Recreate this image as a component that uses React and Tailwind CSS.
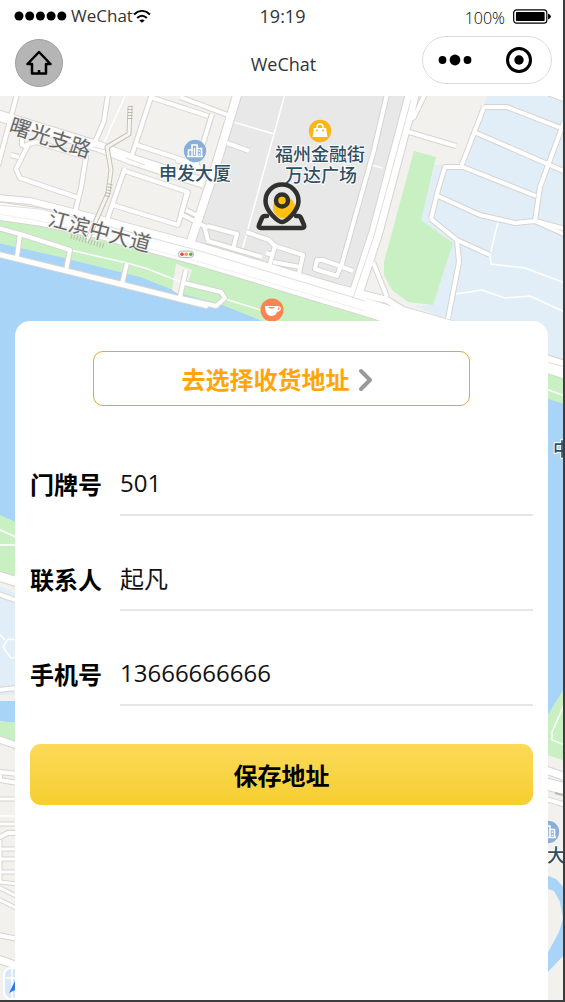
import { useState } from "react";

const LATIN = "font-['Open_Sans','Noto_Sans_CJK_SC',sans-serif]";

const narrowRoads = [
  "M17 94 L-2 166",
  "M108 94 L104 121 L95 142",
  "M152 94 L132 155",
  "M125 168 L107 220",
  "M22 138 V145 L27 147 L16 169 L20 178 L55 190 L79 198",
  "M11 155 L19 157",
  "M24 146 L36 142 L86 157 L81 188 L75 212",
  "M150 97 L208 116",
  "M137 145 L192 163",
  "M125 171 L188 192 L178 225 L113 205",
  "M186 210 L196 215",
  "M180 97 L233 117",
  "M212 114 L201 150 L196 165",
  "M176 160 L200 167",
  "M187 192 L181 214 L208 228",
  "M227 143 L249 151",
  "M204 225 L208 241 L262 257",
  "M207 226 L237 234 L233 249",
  "M246 232 L269 240 L275 246 L269 267",
  "M275 246 L303 255 L299 273",
  "M266 253 L273 255",
  "M273 262 L300 267",
  "M387 94 L374 150 L341 267",
  "M353 271 L323 260 L317 260 L315 269 L337 276 L340 268",
  "M425 94 L414 117 L406 122",
  "M409 132 L456 146",
  "M373 262 L387 297",
  "M484 107 H507 L566 130",
  "M484 107 L461 167",
  "M474 132 L566 172",
  "M431 219 L438 190 L445 167 H463 L536 196",
  "M564 122 L540 187 L535 221",
  "M431 219 L457 240 L490 255",
  "M438 196 L480 215 L515 223 L535 221 L566 229",
  "M535 221 L566 235",
  "M457 240 L459 262 L448 319",
  "M545 92 L566 100",
  "M-2 228 L20 234 L70 250 L66 270",
  "M20 234 L17 257",
  "M127 263 L122 284",
  "M186 270 L180 297",
  "M184 283 L221 292 L225 298 L216 306 L181 298",
];

const wideRoads = [
  { d: "M-3 115 L100 147 L133 160 L204 183", w: 10 },
  { d: "M238 92 L213 175 L189 247", w: 8 },
  { d: "M-3 254 L120 284 L208 306", w: 5 },
  { d: "M413 92 L376 232 L352 306", w: 13 },
  { d: "M-3 198 L30 201 L100 219 L200 246 L340 288 L382 299", w: 6 },
  { d: "M362 294 L387 300 L403 310 L452 324", w: 6 },
  { d: "M-3 211 L40 217 L100 230 L200 257 L365 307 L566 370", w: 17 },
];

const sideRoads = [
  { d: "M-2 576 L18 582", w: 9 },
  { d: "M-2 594 L18 601", w: 4 },
  { d: "M-2 690 L18 688", w: 4 },
  { d: "M-2 739 L18 746", w: 6 },
  { d: "M18 774 L0 772 V780 L18 783", w: 4 },
  { d: "M-2 799 H18", w: 3 },
  { d: "M-2 824 H18", w: 3 },
  { d: "M-2 838 L8 833 H18", w: 4 },
  { d: "M0 849 H18 M0 859 H18 M0 872 H18", w: 3 },
  { d: "M0 840 V882 L18 884", w: 3 },
  { d: "M-2 887 L18 897 M-2 899 L18 909", w: 3 },
  { d: "M-2 935 L18 939", w: 4 },
  { d: "M-2 959 L18 966", w: 7 },
  { d: "M546 770 L566 777", w: 7 },
  { d: "M546 784 L566 789", w: 11 },
  { d: "M546 799 L566 805", w: 4 },
];

function Building({ x, y }) {
  return (
    <g transform={`translate(${x} ${y})`}>
      <circle r="11.8" fill="#fff" opacity=".6" />
      <circle r="11.2" fill="#89aed8" />
      <path d="M-6.500 5V-1H-3V-6H2V5M2-2.500H6.500V5M-8 5.500H8" fill="none" stroke="#fff" strokeWidth="1.600" />
      <path d="M-3-1V5M-0.500-3V4M4.300-0.500V1M4.300 2.500V4" stroke="#fff" strokeWidth="1.400" />
    </g>
  );
}

function MapDrawing() {
  const all = [...narrowRoads.map((d) => ({ d, w: 4 })), ...wideRoads, ...sideRoads];
  return (
    <svg
      className="absolute inset-0 h-full w-full font-['Noto_Sans_CJK_SC',sans-serif]"
      viewBox="0 96 563 904"
      preserveAspectRatio="xMidYMin slice"
      role="img"
      aria-label="地图"
    >
      <rect y="96" width="563" height="904" fill="#f2f1ee" />
      <path d="M239 94 H420 L352 304 L190 247Z" fill="#e8e8e8" />
      <path d="M488 94 H565 V372 L415 306 L433 305 L453 243 L420 220 L435 165 H460Z" fill="#e1eef7" />
      <path d="M414 151 L436 157 L421 220 L453 243 L433 305 L408 302 L392 290 L384 275 V262Z" fill="#c8f0c2" />
      <path d="M-2 215 L180 262 L400 325 L565 376 V760 L-2 580Z" fill="#a7d4f7" />
      <path d="M-2 215 L100 240 L200 266 L400 326 L565 374 V404 L548 399 L262 321 L222 305 L183 294 L140 277 L60 257 L-2 243Z" fill="#c8f0c2" />
      <path d="M176 264 L192 270 L187 285 L181 296 L172 290Z" fill="#f2f1ee" />
      <path d="M-2 514 L18 523 V582 L-2 576Z" fill="#c8f0c2" />
      <path d="M-2 576 L18 582 V600 H-2Z" fill="#f2f1ee" />
      <path d="M-2 586 L18 594 V700 H-2Z" fill="#e1eef7" />
      <path d="M-2 695 H18 V702 H-2Z" fill="#f2f1ee" />
      <path d="M-2 701 H18 V723 L-2 721Z" fill="#a7d4f7" />
      <path d="M-2 721 L18 723 V745 L-2 738Z" fill="#c8f0c2" />
      <path d="M-2 739 L18 746 V1000 H-2Z" fill="#f2f1ee" />
      <path d="M565 687 L546 718 V755 L565 761Z" fill="#c8f0c2" />
      <path d="M546 755 L565 761 V1000 H546Z" fill="#f2f1ee" />
      <path d="M546 875 L556 879 L565 889 V954 L546 974 V956 L559 932 L563 918 L560 902 L554 891 L546 888Z" fill="#a7d4f7" />

      <g fill="none" stroke="#fff" strokeWidth="1.5">
        <path d="M125 96 L104 143 M285 94 L240 258 M233 122 L274 134 M372 165 L382 168" />
        <path d="M70 250 L127 263 L145 268 L181 282 M225 299 L277 315" />
        <path d="M498 222 L490 255 L491 264 L525 268 L565 283 M456 294 L482 290 L505 298 L530 296 L565 312" />
        <path d="M546 389 L565 396 M-2 529 L18 538 M-2 545 H18 M-2 816 H18" />
        <path d="M-2 633 L5 640 M18 640 L8 639 L3 647 L11 658 L18 657" />
        <path d="M564 705 L552 732 V740 L565 745" />
      </g>

      <g fill="none" strokeLinejoin="round">
        {all.map((r) => (
          <path key={`edge${r.d}`} d={r.d} stroke="#d6d4d1" strokeWidth={r.w + 2} />
        ))}
        {all.map((r) => (
          <path key={r.d} d={r.d} stroke="#fff" strokeWidth={r.w} />
        ))}
        <path d="M-2 205 L40 209 L100 224 L200 251 L365 301 M411 100 L374 236 L353 298 M93 147 L106 150 M126 158 L145 165 M546 362 L565 367" stroke="#e0deda" strokeWidth="1" />
        <path d="M-2 214 L40 221 L200 262 L365 311" stroke="#f0efed" strokeWidth="1" />
        <path d="M130 107 L129 134 L107 147 L111 170 L108 193 L87 241" stroke="#c6c2b6" strokeWidth="5" />
        <path d="M130 107 L129 134 L107 147 L111 170 L108 193 L87 241" stroke="#f7f6f1" strokeWidth="3" />
        <path d="M130.500 106 L130 120 M110.500 184 L107 197 M71 236 L104 246" stroke="#bdb9ad" strokeWidth="5" strokeDasharray="1 2" />
        <path d="M555 793 L563 795" stroke="#bdb9ad" strokeWidth="2" />
      </g>

      <g fill="#686868" stroke="#f4f3f1" strokeWidth="2" paintOrder="stroke" fontSize="21">
        <text transform="translate(8 132) rotate(18)">曙光支路</text>
        <text transform="translate(47 225) rotate(15)">江滨中大道</text>
      </g>

      <g fill="#304e64" stroke="#fff" strokeWidth="2" paintOrder="stroke" fontSize="18" fontWeight="500">
        <text x="159" y="180">申发大厦</text>
        <text x="320" y="161" textAnchor="middle">福州金融街</text>
        <text x="321" y="182" textAnchor="middle">万达广场</text>
        <text x="553" y="456">中</text>
        <text x="547" y="862">大</text>
      </g>

      <Building x={195} y={151} />
      <Building x={548} y={832} />

      <g transform="translate(320 131)">
        <circle r="11.200" fill="#fbb614" />
        <path d="M-6-3H6L7.500 6H-7.500Z" fill="#fff" />
        <path d="M-3-2V-4a3 3 0 0 1 6 0v2" fill="none" stroke="#fff" strokeWidth="1.500" />
        <circle cx="-3" cy="-0.500" r="1" fill="#fbb614" />
        <circle cx="3" cy="-0.500" r="1" fill="#fbb614" />
      </g>

      <g transform="translate(272 310)">
        <circle r="11.500" fill="#fb8353" />
        <path d="M-7-4H6C6 2 4 6-0.500 6S-7 2-7-4Z" fill="#fff" />
        <path d="M5-3c5-1 4 4-0.500 4" fill="none" stroke="#fff" strokeWidth="1.300" />
        <path d="M-4-3H3C1-1-2-1-4-3Z" fill="#fb8353" />
      </g>

      <g>
        <rect x="178.500" y="251" width="15" height="6.500" rx="3" fill="#f4f4f2" stroke="#aaa" strokeWidth=".8" />
        <circle cx="182" cy="254.200" r="1.800" fill="#df4a63" />
        <circle cx="186.300" cy="254.200" r="1.800" fill="#f0a23a" />
        <circle cx="190.800" cy="254.200" r="1.800" fill="#52ae4c" />
      </g>

      <g fill="none" stroke="#30302e" strokeWidth="4.500" strokeLinejoin="round" strokeLinecap="round">
        <path d="M267 216H265Q263 216 262 218L259 225Q258 228 261 228H302Q305 228 304 225L301 218Q300 216 298 216H296" />
        <circle cx="284" cy="207.500" r="11" fill="#ffc010" stroke="none" />
        <path d="M282 222C278 222 265.500 211 265.500 201A16.500 16.500 0 0 1 298.500 201C298.500 211 286 222 282 222Z" />
        <circle cx="282" cy="200.500" r="6" fill="#ffc010" />
      </g>

      <g>
        <rect x="4" y="968" width="30" height="31" rx="7" fill="#d8e8fa" stroke="#fff" strokeWidth="2" />
        <path d="M5 978H18M12 969V998" stroke="#fff" strokeWidth="1.500" />
        <path d="M16 979L9 993L17 989Z" fill="#2e7be4" />
      </g>
    </svg>
  );
}

function Header() {
  return (
    <header className={`bg-white text-[#333] ${LATIN}`}>
      <div className="grid h-8 grid-cols-[1fr_auto_1fr] items-center pr-3 pl-[14px]">
        <div className="flex items-center text-[17px]">
          <svg className="mr-1 h-[10px] w-[53px]" viewBox="0 0 53 10" aria-hidden="true">
            {[5, 15.7, 26.4, 37.1, 47.800].map((x) => (
              <circle key={x} cx={x} cy="5" r="4.500" fill="#000" />
            ))}
          </svg>
          WeChat
          <svg className="h-[13px] w-[18px]" viewBox="0 0 18 13" aria-hidden="true">
            <g fill="none" stroke="#000" strokeWidth="2">
              <path d="M1 4.500C6-0.200 12-0.200 17 4.500" />
              <path d="M4.200 8C7.200 5.200 10.800 5.200 13.800 8" />
            </g>
            <path d="M9 12.800L6.300 10.400Q9 8.400 11.700 10.400Z" />
          </svg>
        </div>
        <time className="text-[18px]">19:19</time>
        <div className="flex items-center justify-end gap-2 text-base">
          <span className="pt-1 font-light text-black">100%</span>
          <svg className="h-[15px] w-[38px]" viewBox="0 0 39 15" aria-hidden="true">
            <rect x=".7" y=".7" width="34" height="13.600" rx="3" fill="none" stroke="#000" strokeWidth="1.200" />
            <rect x="3" y="3" width="29.500" height="9" rx="1" />
            <path d="M36 4.500Q42 7.500 36 10.500Z" />
          </svg>
        </div>
      </div>
      <div className="grid h-16 grid-cols-[1fr_auto_1fr] items-center pr-[11px] pl-[15px]">
        <button type="button" aria-label="首页" className="mb-[2px] flex size-12 items-center justify-center rounded-full border border-[#a0a0a0] bg-[#b5b5b5]">
          <svg className="size-[26px]" viewBox="0 0 26 26" fill="none" stroke="#000" strokeWidth="2.500" strokeLinejoin="round" aria-hidden="true">
            <path d="M13 2L1.500 14H6V23.500H20V14H24.500Z" />
            <path d="M13 20V23.500" />
          </svg>
        </button>
        <h1 className="text-[18px]">WeChat</h1>
        <div className="mb-2 flex h-12 w-[130px] justify-self-end rounded-full border border-[#dcdcdc]">
          <button type="button" aria-label="更多" className="flex flex-1 items-center justify-center">
            <svg className="h-3 w-[34px]" viewBox="0 0 34 12" aria-hidden="true">
              <circle cx="4.500" cy="6" r="3.900" />
              <circle cx="17" cy="6" r="5.400" />
              <circle cx="29.500" cy="6" r="3.900" />
            </svg>
          </button>
          <button type="button" aria-label="关闭" className="flex flex-1 items-center justify-center">
            <svg className="size-[26px]" viewBox="0 0 26 26" aria-hidden="true">
              <circle cx="13" cy="13" r="11.500" fill="none" stroke="#000" strokeWidth="3" />
              <circle cx="13" cy="13" r="4.700" />
            </svg>
          </button>
        </div>
      </div>
    </header>
  );
}

function Field({ id, label, type = "text", value, onChange }) {
  return (
    <div className="flex items-center">
      <label htmlFor={id} className="w-[90px] shrink-0 pt-[2px] text-2xl font-bold text-black">
        {label}
      </label>
      <input
        id={id}
        type={type}
        value={value}
        onChange={onChange}
        className="h-16 min-w-0 flex-1 border-b-2 border-[#e6e6e6] bg-transparent pb-[2px] text-2xl text-[#111] outline-none"
      />
    </div>
  );
}

export default function App() {
  const [address, setAddress] = useState({ door: "501", name: "起凡", phone: "13666666666" });
  const update = (key) => (e) => setAddress({ ...address, [key]: e.target.value });

  return (
    <div className={`flex min-h-screen flex-col border-r-2 border-b-2 border-[#3d3d3f] bg-white ${LATIN}`}>
      <Header />
      <main className="relative flex flex-1 flex-col overflow-hidden px-[15px] pt-[225px]">
        <MapDrawing />
        <form
          className="relative flex flex-1 flex-col rounded-t-[15px] bg-white px-[15px] pt-[30px]"
          onSubmit={(e) => e.preventDefault()}
        >
          <button
            type="button"
            className="flex h-[55px] w-3/4 items-center justify-center gap-2 self-center rounded-[10px] border border-[#eaa52b] pt-[2px] pr-2 text-2xl font-bold text-[#ffa50a]"
          >
            去选择收货地址
            <svg className="h-6 w-4" viewBox="0 0 16 24" fill="none" stroke="#999" strokeWidth="4" strokeLinecap="round" strokeLinejoin="round" aria-hidden="true">
              <path d="M3 3L12 12L3 21" />
            </svg>
          </button>
          <div className="mt-[46px] flex flex-col gap-[31px]">
            <Field id="door" label="门牌号" value={address.door} onChange={update("door")} />
            <Field id="name" label="联系人" value={address.name} onChange={update("name")} />
            <Field id="phone" label="手机号" type="tel" value={address.phone} onChange={update("phone")} />
          </div>
          <button
            type="submit"
            className="mt-[38px] h-[61px] rounded-[11px] bg-linear-to-b from-[#fcd957] to-[#f5cf2e] pt-[2px] text-2xl font-bold text-black"
          >
            保存地址
          </button>
        </form>
      </main>
    </div>
  );
}
